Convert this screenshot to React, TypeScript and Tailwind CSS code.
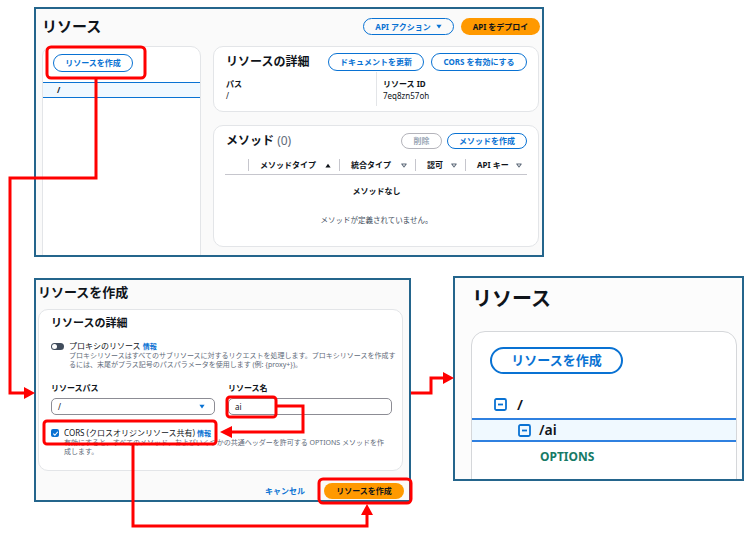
import type { ReactNode } from "react";

function Caret({ className }: { className?: string }) {
  return (
    <svg viewBox="0 0 8 6" className={className}>
      <path d="M0.5 0.5 H7.5 L4 5.5 Z" fill="currentColor" />
    </svg>
  );
}

function SortUp() {
  return (
    <svg viewBox="0 0 8 6" className="w-[6px] h-[5px] text-[#0f141a]">
      <path d="M0.5 5.5 H7.5 L4 0.5 Z" fill="currentColor" />
    </svg>
  );
}

function SortDown() {
  return (
    <svg viewBox="0 0 8 6" className="w-[6px] h-[5px] text-[#5f6b7a]">
      <path d="M1 1 H7 L4 5 Z" fill="none" stroke="currentColor" strokeWidth="1.4" strokeLinejoin="round" />
    </svg>
  );
}

function MinusBox() {
  return (
    <svg viewBox="0 0 13 13" className="w-[13px] h-[13px] shrink-0">
      <rect x="1" y="1" width="11" height="11" rx="1.5" fill="none" stroke="#0972d3" strokeWidth="1.8" />
      <path d="M4 6.5 H9" stroke="#0972d3" strokeWidth="1.8" />
    </svg>
  );
}

function Pill({ children, className }: { children: ReactNode; className: string }) {
  return (
    <button
      type="button"
      className={`rounded-full border border-[#0972d3] text-[#0972d3] text-[8px] font-bold leading-none flex items-center justify-center ${className}`}
    >
      {children}
    </button>
  );
}

function HeaderCell({ label, width, sort, last }: { label: string; width: string; sort: "up" | "down"; last?: boolean }) {
  return (
    <div className={`flex items-center ${width}`}>
      <span className="w-px h-[12px] bg-[#c6c6cd]" />
      <span className="ml-[11px] text-[8px] font-bold text-[#0f141a] leading-none">{label}</span>
      <span className={`ml-auto ${last ? "mr-[5px]" : "mr-[8px]"}`}>{sort === "up" ? <SortUp /> : <SortDown />}</span>
    </div>
  );
}

function ResourcePanel() {
  return (
    <section className="w-[510px] h-[250px] border-2 border-[#24658c] bg-[#fafafa] overflow-hidden pl-[6px] pr-[2px] pt-[9px]">
      <div className="flex items-center justify-between h-[17px]">
        <h1 className="text-[15px] font-bold leading-none text-[#0f141a]">リソース</h1>
        <div className="flex gap-[7px]">
          <Pill className="w-[91px] h-[17px] gap-[5px]">
            API アクション <Caret className="w-[6px] h-[5px]" />
          </Pill>
          <button
            type="button"
            className="w-[79px] h-[17px] rounded-full bg-[#ff9900] text-[#0f141a] text-[8px] font-bold leading-none"
          >
            API をデプロイ
          </button>
        </div>
      </div>

      <div className="flex gap-[12px] mt-[11px]">
        {/* tree */}
        <div className="w-[159px] h-[220px] rounded-[10px] border border-[#e3e5e8] bg-white pt-[7px] shrink-0">
          <div className="pl-[10px]">
            <Pill className="w-[80px] h-[18px]">リソースを作成</Pill>
          </div>
          <div className="mt-[10px] h-[16px] border-y border-[#0972d3] bg-[#f0f8ff] pl-[14px] flex items-center text-[8px] font-bold text-[#0f141a]">
            /
          </div>
        </div>

        <div className="w-[326px] flex flex-col">
          {/* details */}
          <div className="h-[66px] rounded-[10px] border border-[#e3e5e8] bg-white pt-[6px] pl-[12px] pr-[11px]">
            <div className="flex items-center justify-between h-[18px]">
              <h2 className="text-[12px] font-bold leading-none text-[#0f141a]">リソースの詳細</h2>
              <div className="flex gap-[7px]">
                <Pill className="w-[96px] h-[18px]">ドキュメントを更新</Pill>
                <Pill className="w-[96px] h-[18px]">CORS を有効にする</Pill>
              </div>
            </div>
            <div className="flex h-[34px] mt-[1px]">
              <div className="w-[150px] pt-[6px]">
                <div className="text-[8px] font-bold leading-[12px] text-[#0f141a]">パス</div>
                <div className="text-[8px] leading-[12px] text-[#0f141a]">/</div>
              </div>
              <div className="border-l border-[#e3e5e8] pl-[6px] pt-[6px]">
                <div className="text-[8px] font-bold leading-[12px] text-[#0f141a]">リソース ID</div>
                <div className="text-[8px] leading-[12px] text-[#0f141a]">7eq8zn57oh</div>
              </div>
            </div>
          </div>

          {/* methods */}
          <div className="mt-[13px] h-[122px] rounded-[10px] border border-[#e3e5e8] bg-white pt-[7px] pl-[12px] pr-[11px]">
            <div className="flex items-center justify-between h-[16px]">
              <h2 className="text-[12px] font-bold leading-none text-[#0f141a]">
                メソッド <span className="font-normal text-[#5f6b7a]">(0)</span>
              </h2>
              <div className="flex gap-[5px]">
                <button
                  type="button"
                  className="w-[41px] h-[16px] rounded-full border border-[#b4b4bb] text-[#9ba7b6] text-[8px] font-bold leading-none"
                >
                  削除
                </button>
                <Pill className="w-[80px] h-[16px]">メソッドを作成</Pill>
              </div>
            </div>
            <div className="mt-[7px] -ml-px flex h-[19px] border-b border-[#c6c6cd]">
              <div className="w-[23px]" />
              <HeaderCell label="メソッドタイプ" width="w-[91px]" sort="up" />
              <HeaderCell label="統合タイプ" width="w-[76px]" sort="down" />
              <HeaderCell label="認可" width="w-[50px]" sort="down" />
              <HeaderCell label="API キー" width="w-[62px]" sort="down" last />
            </div>
            <div className="mt-[10px] text-center text-[8px] font-bold leading-[12px] text-[#0f141a]">メソッドなし</div>
            <div className="mt-[17px] text-center text-[7.5px] leading-[12px] text-[#414d5c]">
              メソッドが定義されていません。
            </div>
          </div>
        </div>
      </div>
    </section>
  );
}

function CreatePanel() {
  return (
    <section className="w-[377px] h-[224px] border-2 border-[#24658c] bg-[#fafafa] mt-[2px] pl-[2px] pr-[5px] pt-[4px] overflow-hidden shrink-0">
      <h2 className="text-[13px] font-bold leading-[16px] text-[#0f141a]">リソースを作成</h2>
      <div className="mt-[9px] w-[365px] h-[162px] rounded-[10px] border border-[#e3e5e8] bg-white pl-[12px] pr-[10px] pt-[6px]">
        <h3 className="text-[11px] font-bold leading-[14px] text-[#0f141a]">リソースの詳細</h3>

        <div className="mt-[11px] h-[10px] flex items-center gap-[5px]">
          <span className="w-[13px] h-[7px] rounded-full bg-[#414d5c] flex items-center pl-[1px]">
            <span className="w-[5px] h-[5px] rounded-full bg-white" />
          </span>
          <span className="text-[8px] leading-[10px] text-[#0f141a]">
            プロキシのリソース <span className="text-[7px] font-bold text-[#0972d3]">情報</span>
          </span>
        </div>
        <p className="pl-[18px] text-[7px] leading-[9px] text-[#5f6b7a] whitespace-nowrap">
          プロキシリソースはすべてのサブリソースに対するリクエストを処理します。プロキシリソースを作成す
          <br />
          るには、末尾がプラス記号のパスパラメータを使用します (例: {"{proxy+}"})。
        </p>

        <div className="mt-[14px] flex gap-[13px]">
          <div className="w-[164px]">
            <div className="text-[8px] font-bold leading-[10px] text-[#0f141a]">リソースパス</div>
            <div className="mt-[5px] h-[17px] rounded-[5px] border border-[#8c8c94] bg-white flex items-center pl-[6px] pr-[9px] text-[8px] text-[#0f141a]">
              /
              <Caret className="ml-auto w-[6px] h-[5px] text-[#0972d3]" />
            </div>
          </div>
          <div className="w-[164px]">
            <div className="text-[8px] font-bold leading-[10px] text-[#0f141a]">リソース名</div>
            <div className="mt-[5px] h-[17px] rounded-[5px] border border-[#8c8c94] bg-white flex items-center pl-[6px] text-[8px] text-[#0f141a]">
              ai
            </div>
          </div>
        </div>

        <div className="mt-[13px] h-[10px] flex items-center gap-[5px]">
          <span className="w-[8px] h-[8px] rounded-[2px] bg-[#0972d3] flex items-center justify-center">
            <svg viewBox="0 0 8 8" className="w-[7px] h-[7px]">
              <path d="M1.5 4.2 L3.3 6 L6.6 2" fill="none" stroke="white" strokeWidth="1.3" />
            </svg>
          </span>
          <span className="text-[8px] leading-[10px] text-[#0f141a]">
            CORS (クロスオリジンリソース共有) <span className="text-[7px] font-bold text-[#0972d3]">情報</span>
          </span>
        </div>
        <p className="pl-[13px] text-[7px] leading-[9px] text-[#5f6b7a] whitespace-nowrap">
          有効にすると、すべてのメソッド、およびいくつかの共通ヘッダーを許可する OPTIONS メソッドを作
          <br />
          成します。
        </p>
      </div>

      <div className="mt-[12px] flex items-center justify-end gap-[19px]">
        <span className="text-[8px] font-bold text-[#0972d3] leading-none">キャンセル</span>
        <button
          type="button"
          className="w-[80px] h-[16px] rounded-full bg-[#ff9900] text-[#0f141a] text-[8px] font-bold leading-none"
        >
          リソースを作成
        </button>
      </div>
    </section>
  );
}

function ResultPanel() {
  return (
    <section className="ml-[42px] w-[291px] h-[205px] border-2 border-[#24658c] bg-[#fcfcfc] overflow-hidden pl-[16px] pr-[5px] pt-[9px] shrink-0">
      <h2 className="pl-[1px] text-[20px] font-bold leading-[24px] text-[#0f141a]">リソース</h2>
      <div className="mt-[20px] h-[170px] rounded-[14px] border border-[#d5d7da] bg-white pt-[15px]">
        <div className="pl-[18px]">
          <button
            type="button"
            className="w-[133px] h-[27px] rounded-full border-2 border-[#0972d3] text-[#0972d3] text-[13px] font-bold leading-none"
          >
            リソースを作成
          </button>
        </div>
        <div className="mt-[20px] h-[20px] pl-[22px] flex items-center gap-[10px]">
          <MinusBox />
          <span className="text-[15px] font-semibold leading-none text-[#0f141a]">/</span>
        </div>
        <div className="mt-[4px] h-[24px] border-y-2 border-[#2f80e0] bg-[#f0f9ff] pl-[46px] flex items-center gap-[8px]">
          <MinusBox />
          <span className="text-[14px] font-semibold leading-none text-[#0f141a]">/ai</span>
        </div>
        <div className="mt-[5px] h-[20px] pl-[68px] flex items-center text-[12px] font-bold text-[#167a66] leading-none">
          OPTIONS
        </div>
      </div>
    </section>
  );
}

function Annotations() {
  const red = "#ff0000";
  return (
    <svg className="absolute inset-0 pointer-events-none" width="750" height="538" viewBox="0 0 750 538">
      <g fill="none" stroke={red} strokeWidth="3">
        <rect x="47" y="47" width="98" height="31" rx="4" />
        <path d="M96 78 V178 H10 V393 H26" />
        <rect x="227" y="397" width="49" height="20" rx="3" />
        <path d="M276 406 H303 V432 H230" />
        <rect x="44" y="421" width="172" height="23" rx="3" />
        <path d="M133 444 V526 H367 V513" />
        <rect x="319" y="479" width="92" height="24" rx="4" />
        <path d="M411 393 H431 V378 H444" />
      </g>
      <g fill={red}>
        <polygon points="24,387 35,393 24,399" />
        <polygon points="232,426 220,432 232,438" />
        <polygon points="361,515 367,504 373,515" />
        <polygon points="443,372 454,378 443,384" />
      </g>
    </svg>
  );
}

export default function App() {
  return (
    <div className="relative w-[750px] h-[538px] bg-white overflow-hidden font-['Noto_Sans','Noto_Sans_CJK_JP',sans-serif]">
      <div className="flex flex-col pl-[34px] pt-[7px]">
        <ResourcePanel />
        <div className="flex items-start mt-[19px]">
          <CreatePanel />
          <ResultPanel />
        </div>
      </div>
      <Annotations />
    </div>
  );
}
